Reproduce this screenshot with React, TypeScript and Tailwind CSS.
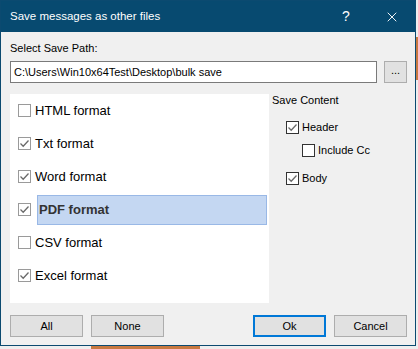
import { X } from 'lucide-react';

const formats = [
  { label: 'HTML format', checked: false },
  { label: 'Txt format', checked: true },
  { label: 'Word format', checked: true },
  { label: 'PDF format', checked: true, selected: true },
  { label: 'CSV format', checked: false },
  { label: 'Excel format', checked: true },
];

function Check({ checked, dark }: { checked: boolean; dark?: boolean }) {
  return (
    <div
      className={`w-[13px] h-[13px] bg-white border flex items-center justify-center shrink-0 ${
        dark ? 'border-[#333333]' : 'border-[#9a9a9a]'
      }`}
    >
      {checked && (
        <svg width="11" height="11" viewBox="0 0 11 11">
          <path d="M1.5 5.5 L4.2 8.2 L9.5 2.5" fill="none" stroke="#6a6a6a" strokeWidth="1.3" />
        </svg>
      )}
    </div>
  );
}

function Btn({ children, primary }: { children: string; primary?: boolean }) {
  return (
    <button
      className={`w-[73px] h-[22px] bg-[#e1e1e1] text-[11px] text-black flex items-center justify-center ${
        primary ? 'border-2 border-[#0078d7]' : 'border border-[#adadad]'
      }`}
    >
      {children}
    </button>
  );
}

export default function App() {
  return (
    <div
      className="w-[418px] h-[349px] bg-[#eeeeee] relative overflow-hidden"
      style={{ fontFamily: '"Liberation Sans", Arial, sans-serif' }}
    >
      <div className="absolute right-0 top-[37px] w-[2px] h-[43px] bg-[#c87941]" />
      <div className="absolute left-[91px] bottom-0 w-[109px] h-[3px] bg-[#c87941]" />
      <div className="w-[416px] h-[346px] bg-[#f0f0f0] border border-[#0b4a70] flex flex-col">
        {/* title bar */}
        <div className="h-[31px] bg-[#074a70] flex items-center text-white shrink-0">
          <span className="ml-[9px] text-[11.5px] flex-1">Save messages as other files</span>
          <span className="text-[14px] w-[46px] text-center">?</span>
          <span className="w-[46px] flex justify-center">
            <X className="w-[16px] h-[16px]" strokeWidth={1.4} />
          </span>
        </div>

        <div className="px-[9px] pt-[9px] h-[29px] text-[11px] leading-[14px] text-black">Select Save Path:</div>
        <div className="flex items-center ml-[9px] gap-[7px]">
          <div className="w-[367px] h-[22px] bg-white border border-[#7a7a7a] flex items-center px-[3px] text-[11px] text-black">
            C:\Users\Win10x64Test\Desktop\bulk save
          </div>
          <div className="w-[23px] h-[22px] bg-[#e1e1e1] border border-[#adadad] flex items-center justify-center text-[11px] pb-[4px]">
            ...
          </div>
        </div>

        <div className="flex mt-[11px] ml-[9px]">
          <div className="w-[259px] h-[209px] bg-white flex flex-col">
            {formats.map((f) => (
              <div key={f.label} className="h-[33px] flex items-center pl-[8px]">
                <Check checked={f.checked} />
                {f.selected ? (
                  <div className="ml-[6px] w-[230px] h-[30px] bg-[#c4d7f2] border border-[#99b8e6] flex items-center pl-[1px] text-[13px] font-bold text-[#333333]">
                    {f.label}
                  </div>
                ) : (
                  <span className="ml-[4px] text-[13px] text-black">{f.label}</span>
                )}
              </div>
            ))}
          </div>
          <div className="flex flex-col pl-[3px] text-[11px] text-black">
            <div className="h-[13px] leading-[13px]">Save Content</div>
            <div className="flex items-center h-[13px] gap-[3px] ml-[14px] mt-[14px]">
              <Check checked dark />
              <span>Header</span>
            </div>
            <div className="flex items-center h-[13px] gap-[3px] ml-[30px] mt-[10px]">
              <Check checked={false} dark />
              <span>Include Cc</span>
            </div>
            <div className="flex items-center h-[13px] gap-[3px] ml-[14px] mt-[15px]">
              <Check checked dark />
              <span>Body</span>
            </div>
          </div>
        </div>

        <div className="flex items-center ml-[9px] mt-[12px]">
          <Btn>All</Btn>
          <div className="ml-[8px]">
            <Btn>None</Btn>
          </div>
          <div className="ml-[89px]">
            <Btn primary>Ok</Btn>
          </div>
          <div className="ml-[8px]">
            <Btn>Cancel</Btn>
          </div>
        </div>
      </div>
    </div>
  );
}
